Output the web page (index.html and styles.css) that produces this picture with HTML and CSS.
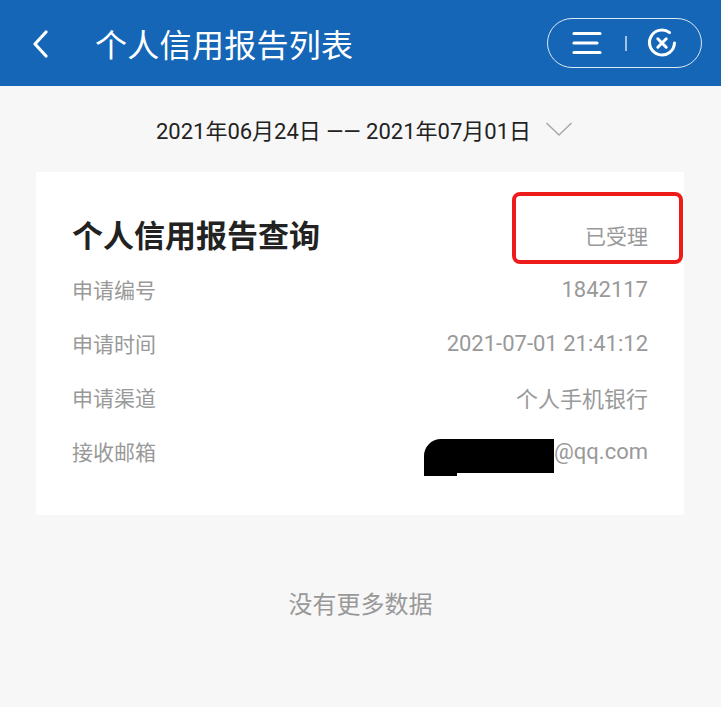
FILE: index.html
```html
<!DOCTYPE html>
<html lang="zh-CN">
<head>
  <meta charset="UTF-8">
  <meta name="viewport" content="width=device-width, initial-scale=1.0">
  <title>个人信用报告列表</title>
  <link rel="stylesheet" href="styles.css">
</head>
<body>

<header class="topbar">
  <span class="back">
    <svg width="18" height="28" viewBox="0 0 18 28"><path d="M14 2 L3 14 L14 26" fill="none" stroke="#fff" stroke-width="3.2" stroke-linecap="round" stroke-linejoin="round"/></svg>
  </span>
  <h1>个人信用报告列表</h1>
  <div class="capsule">
    <svg class="menu" width="30" height="24" viewBox="0 0 30 24"><path d="M2 2.5 H28 M2 12 H25 M2 21.5 H28" stroke="#fff" stroke-width="3.2" stroke-linecap="round"/></svg>
    <span class="divider"></span>
    <svg class="close" width="32" height="32" viewBox="0 0 32 32">
      <path d="M23.5 5.5 A12.5 12.5 0 1 0 28.5 16" fill="none" stroke="#fff" stroke-width="3" stroke-linecap="round"/>
      <path d="M11.8 11.8 L20.2 20.2 M20.2 11.8 L11.8 20.2" stroke="#fff" stroke-width="3" stroke-linecap="round"/>
    </svg>
  </div>
</header>

<div class="date-range">
  <span>2021年06月24日 —— 2021年07月01日</span>
  <svg width="28" height="16" viewBox="0 0 28 16"><path d="M1.5 2 L14 14 L26.5 2" fill="none" stroke="#aaa" stroke-width="1.6"/></svg>
</div>

<section class="card">
  <div class="card-head">
    <h2>个人信用报告查询</h2>
    <span class="status">已受理</span>
  </div>
  <span class="mark"></span>
  <div class="row"><span class="label">申请编号</span><span class="value">1842117</span></div>
  <div class="row"><span class="label">申请时间</span><span class="value">2021-07-01 21:41:12</span></div>
  <div class="row"><span class="label">申请渠道</span><span class="value">个人手机银行</span></div>
  <div class="row"><span class="label">接收邮箱</span><span class="value email"><span class="blot"></span>@qq.com</span></div>
</section>

<p class="no-more">没有更多数据</p>

</body>
</html>
```

FILE: styles.css
```css
* {
  margin: 0;
  padding: 0;
  box-sizing: border-box;
}
body {
  font-family: Roboto, "Noto Sans CJK SC", sans-serif;
  background-color: #f7f7f7;
  color: #222;
  overflow: hidden;
}
.topbar {
  height: 86px;
  background: #1666b7;
  display: flex;
  align-items: center;
  padding: 0 19px 0 32px;
  color: #fff;
}
.back {
  display: flex;
  margin-right: 45px;
  margin-top: 1px;
}
.topbar h1 {
  font-size: 32px;
  font-weight: 400;
  letter-spacing: 0.3px;
}
.capsule {
  margin-left: auto;
  width: 155px;
  height: 50px;
  border: 1.5px solid rgba(255, 255, 255, 0.85);
  border-radius: 25px;
  display: flex;
  align-items: center;
  padding-left: 24px;
}
.divider {
  width: 1.5px;
  height: 15px;
  background: rgba(255, 255, 255, 0.6);
  margin: 0 19px 0 23px;
}
.date-range {
  height: 44px;
  margin: 21px 0 21px;
  display: flex;
  align-items: center;
  justify-content: center;
  gap: 14px;
  font-size: 22px;
  padding-left: 8px;
}
.card {
  position: relative;
  margin: 0 37px 0 36px;
  background: #fff;
  padding: 36px 36px 37px;
}
.card-head {
  height: 54px;
  display: flex;
  align-items: center;
  justify-content: space-between;
}
.card-head h2 {
  font-size: 31px;
  font-weight: 700;
  color: #222;
  margin-top: -3px;
}
.status {
  font-size: 21px;
  color: #999;
}
/* red outline drawn around the status */
.mark {
  position: absolute;
  left: 476px;
  top: 20px;
  width: 171px;
  height: 72px;
  border: 4px solid #ee1b1b;
  border-radius: 8px;
}
.row {
  height: 54px;
  display: flex;
  align-items: center;
  justify-content: space-between;
  color: #999;
}
.label {
  font-size: 21px;
}
.value {
  font-size: 22px;
}
.email {
  display: inline-flex;
  align-items: center;
}
.blot {
  position: relative;
  width: 130px;
  height: 34px;
  margin-top: 10px;
  background: #000;
  border-top-left-radius: 17px;
}
.blot::after {
  content: "";
  position: absolute;
  left: 0;
  top: 34px;
  width: 33px;
  height: 3px;
  background: #000;
}
.no-more {
  margin-top: 75px;
  text-align: center;
  font-size: 24px;
  line-height: 30px;
  color: #999;
}
```
